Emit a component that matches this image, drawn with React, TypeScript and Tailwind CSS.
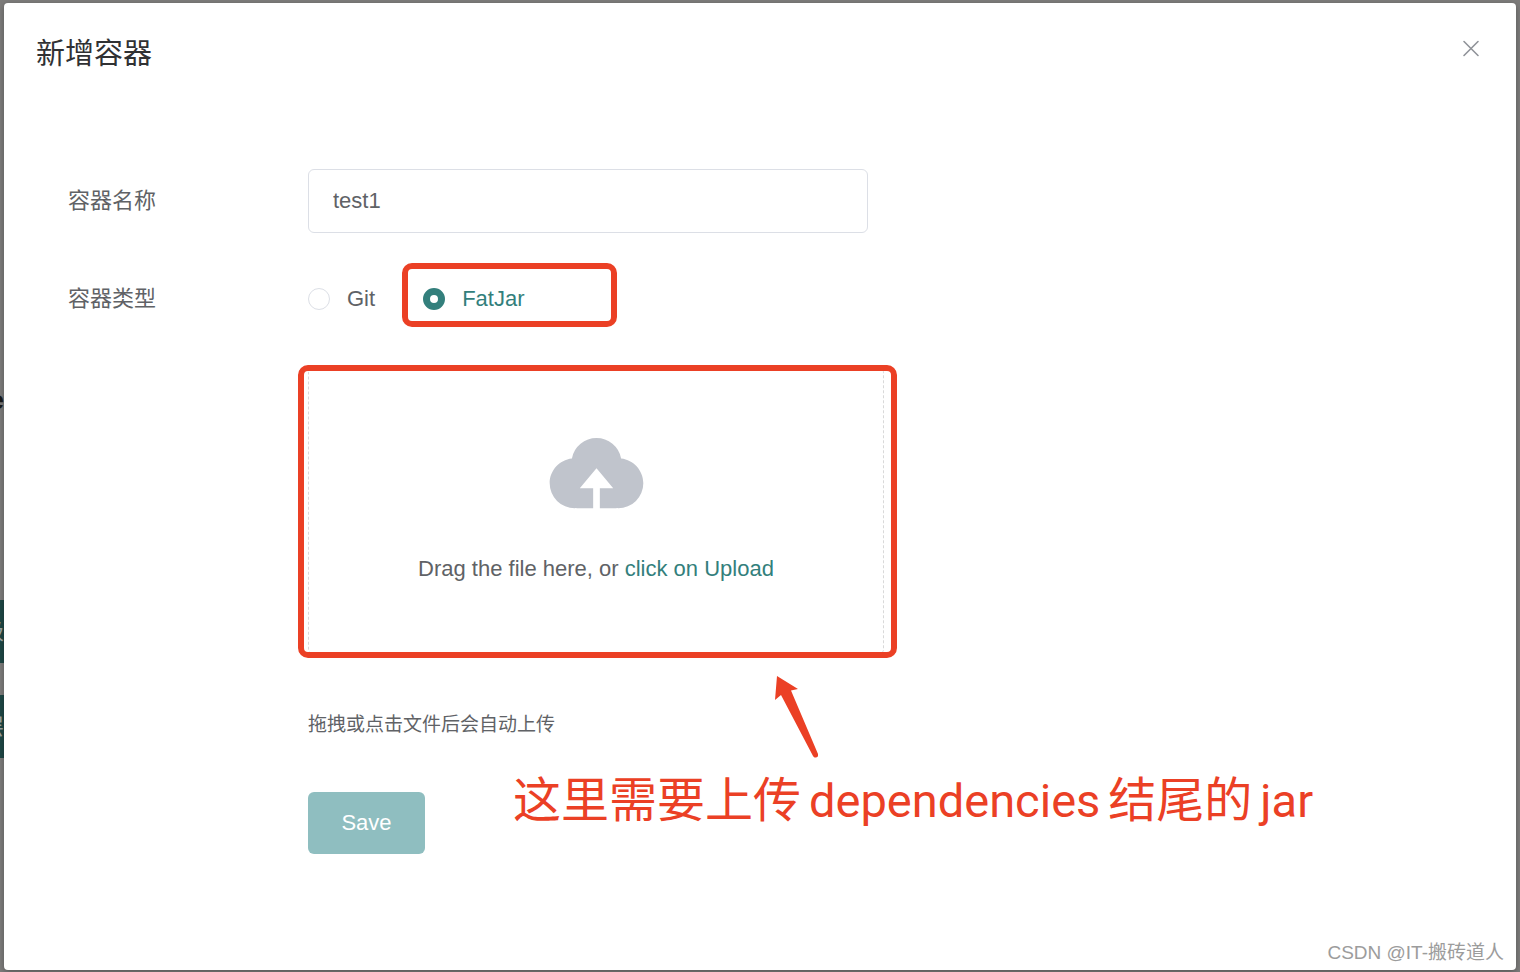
import { useState } from "react";

const types = ["Git", "FatJar"];

function PageBehind() {
    return (
        <div aria-hidden="true" className="absolute inset-y-0 left-0 w-1 overflow-hidden">
            <div className="absolute right-0 top-[386px] text-[26px] leading-7 font-bold text-[#1a1a1a]">e</div>
            <div className="absolute inset-x-0 top-[600px] h-[63px] bg-[#1f4745]">
                <div className="absolute right-0 top-5 text-[22px] leading-6 text-[#9fa6a5]">级</div>
            </div>
            <div className="absolute inset-x-0 top-[695px] h-[63px] bg-[#1f4745]">
                <div className="absolute right-0 top-5 text-[22px] leading-6 text-[#9fa6a5]">层</div>
            </div>
        </div>
    );
}

function CloudIcon() {
    return (
        <svg viewBox="0 0 1024 1024" className="size-[107px] fill-[#c0c4cc]" aria-hidden="true">
            <path d="M544 864V672h128L512 480 352 672h128v192H320v-1.6c-5.376.32-10.496 1.6-16 1.6A240 240 0 0 1 64 624c0-123.136 93.12-223.488 212.608-237.248A239.808 239.808 0 0 1 512 192a239.872 239.872 0 0 1 235.456 194.752c119.488 13.76 212.48 114.112 212.48 237.248a240 240 0 0 1-240 240c-5.376 0-10.56-1.28-16-1.6v1.6H544z" />
        </svg>
    );
}

export default function App() {
    const [name, setName] = useState("test1");
    const [type, setType] = useState("FatJar");

    return (
        <div className="relative flex min-h-screen overflow-hidden bg-[#7d7c7b] px-1 pt-[3px] pb-0.5 font-['Liberation_Sans','Noto_Sans_CJK_SC',sans-serif] text-[22px] leading-8 text-[#606266]">
            <PageBehind />
            <div role="dialog" aria-labelledby="dialog-title" className="relative flex-1 rounded bg-white shadow-[0_2px_6px_rgba(0,0,0,0.3)]">
                <header className="flex items-start justify-between pt-8 pr-8 pl-8">
                    <h1 id="dialog-title" className="text-[29px] leading-[38px] text-[#303133]">新增容器</h1>
                    <button type="button" aria-label="Close" className="mt-1 mr-1 text-[#909399]">
                        <svg viewBox="0 0 18 18" className="size-[18px]" fill="none" stroke="currentColor" strokeWidth="1.6" strokeLinecap="round">
                            <path d="M2 2.500l14 14M16 2.500L2 16.500" />
                        </svg>
                    </button>
                </header>

                <form className="px-16 pt-24" onSubmit={(e) => e.preventDefault()}>
                    <div className="flex items-center">
                        <label htmlFor="name" className="w-60 shrink-0">容器名称</label>
                        <input
                            id="name"
                            value={name}
                            onChange={(e) => setName(e.target.value)}
                            className="h-16 w-full max-w-[560px] rounded-md border border-[#dcdfe6] px-6 outline-none"
                        />
                    </div>

                    <div role="radiogroup" aria-labelledby="type-label" className="mt-[34px] flex h-16 items-center">
                        <span id="type-label" className="w-60 shrink-0">容器类型</span>
                        <div className="flex gap-12">
                            {types.map((t) => (
                                <label key={t} className="relative flex h-16 items-center gap-[17px]">
                                    <input
                                        type="radio"
                                        name="type"
                                        value={t}
                                        checked={type === t}
                                        onChange={() => setType(t)}
                                        className="peer size-[22px] appearance-none rounded-full border border-[#dcdfe6] bg-white checked:border-[7px] checked:border-[#337f7c]"
                                    />
                                    <span className="peer-checked:text-[#337f7c]">{t}</span>
                                    {t === "FatJar" && (
                                        <span className="pointer-events-none absolute -top-1 -left-[21px] h-16 w-[215px] rounded-[10px] border-6 border-[#eb4025]" />
                                    )}
                                </label>
                            ))}
                        </div>
                    </div>

                    <div className="mt-9 ml-60">
                        <div className="relative max-w-[576px]">
                            <label className="flex h-[288px] cursor-pointer flex-col items-center rounded-md border border-dashed border-[#d9d9d9] pt-[50px]">
                                <input type="file" accept=".jar" className="sr-only" />
                                <CloudIcon />
                                <span className="mt-7">
                                    Drag the file here, or <em className="text-[#337f7c] not-italic">click on Upload</em>
                                </span>
                            </label>
                            <div className="pointer-events-none absolute -inset-x-[10px] -top-0.5 -bottom-[3px] mr-[-3px] rounded-[10px] border-6 border-[#eb4025]" />
                            <svg viewBox="0 0 46 82" className="absolute top-[309px] left-[466px] h-[82px] w-[46px] fill-[#eb4025]" aria-hidden="true">
                                <path d="M3 0L24 13L17 14.500L44 78Q44.500 82 41 81.500Q40 81.500 39 80L7 19L1 24Z" />
                            </svg>
                            <p className="absolute top-[406px] left-[205px] flex items-baseline gap-2 font-['Roboto','Noto_Sans_CJK_SC',sans-serif] text-[48px] leading-14 whitespace-nowrap text-[#eb4025]">
                                <span>这里需要上传</span>
                                <span className="text-[47px]">dependencies</span>
                                <span>结尾的</span>
                                <span className="text-[47px]">jar</span>
                            </p>
                        </div>
                        <p className="mt-[54px] text-[19px]">拖拽或点击文件后会自动上传</p>
                        <button type="submit" className="mt-[51px] h-[62px] min-w-[117px] rounded-md bg-[#8fbec0] px-8 text-white">
                            Save
                        </button>
                    </div>
                </form>

                <div className="absolute right-3 bottom-[3px] text-[19px] leading-7 text-[#9c9c9c]">
                    CSDN @IT-搬砖道人
                </div>
            </div>
        </div>
    );
}
